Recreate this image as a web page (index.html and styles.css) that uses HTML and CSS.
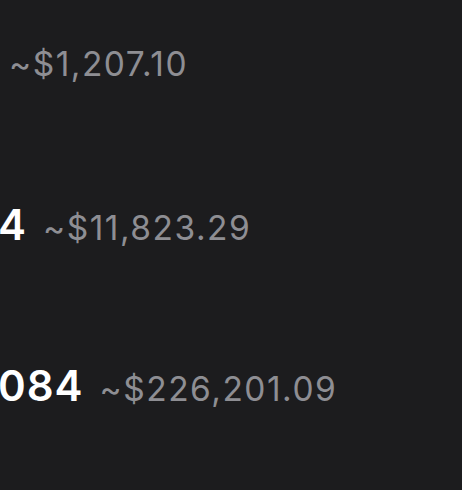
FILE: index.html
```html
<!DOCTYPE html>
<html>
<head>
<meta charset="utf-8">
<link rel="stylesheet" href="styles.css">
</head>
<body>
<div class="list">
  <div class="row first">
    <span class="fiat">~$1,207.10</span>
  </div>
  <div class="row">
    <span class="amount">4</span>
    <span class="fiat">~$11,823.29</span>
  </div>
  <div class="row">
    <span class="amount">084</span>
    <span class="fiat">~$226,201.09</span>
  </div>
</div>
</body>
</html>
```

FILE: styles.css
```css
html, body {
  margin: 0;
  padding: 0;
  background: #1c1c1e;
  width: 462px;
  height: 490px;
  overflow: hidden;
}
.list {
  display: flex;
  flex-direction: column;
  padding-top: 44px;
  gap: 115px;
  font-family: Inter, "Noto Sans", sans-serif;
}
.row {
  display: flex;
  align-items: baseline;
  gap: 16px;
  height: 46px;
  white-space: nowrap;
}
.row.first {
  padding-left: 9px;
  height: 40px;
}
.amount {
  color: #ffffff;
  font-size: 42px;
  font-weight: 600;
  letter-spacing: 1px;
  margin-left: -2px;
}
.fiat {
  color: #8e8e93;
  font-size: 33.5px;
  font-weight: 400;
  letter-spacing: 1.5px;
}
```
